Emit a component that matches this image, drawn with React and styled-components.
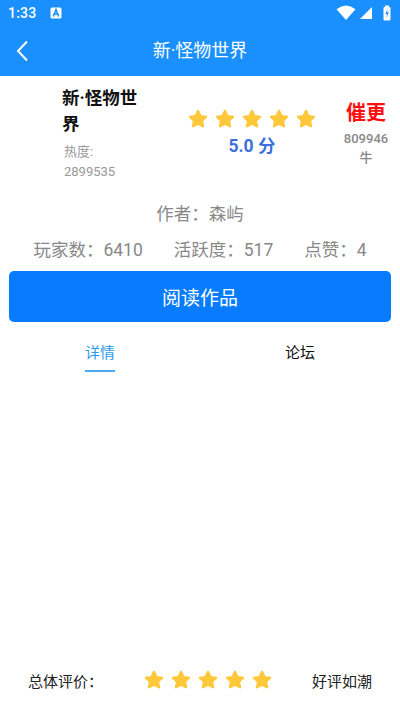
import React from "react";
import styled, { createGlobalStyle } from "styled-components";

const Global = createGlobalStyle`
  html, body { margin: 0; padding: 0; background: #fff; }
  body { font-family: Roboto, "Noto Sans CJK SC", sans-serif; }
  * { box-sizing: border-box; }
`;

const Page = styled.div`
  display: flex;
  flex-direction: column;
  min-height: 100vh;
  width: 400px;
  background: #fff;
`;

const Header = styled.header`
  background: #1a8ffe;
  color: #fff;
`;

const StatusBar = styled.div`
  height: 26px;
  display: flex;
  align-items: center;
  padding: 0 8px;
  font-family: Roboto, sans-serif;
  font-size: 14px;
  font-weight: 500;
`;

const Time = styled.span`
  letter-spacing: 0.2px;
`;

const StatusIcons = styled.div`
  margin-left: auto;
  display: flex;
  align-items: center;
  gap: 3px;
`;

const NavBar = styled.div`
  height: 50px;
  display: flex;
  align-items: center;
  position: relative;
  justify-content: center;
`;

const Back = styled.button`
  position: absolute;
  left: 12px;
  top: 50%;
  transform: translateY(-50%);
  background: none;
  border: 0;
  padding: 4px;
  display: flex;
`;

const NavTitle = styled.h1`
  margin: 0;
  font-size: 18px;
  font-weight: 400;
  line-height: 24px;
`;

const InfoRow = styled.section`
  display: flex;
  padding: 9px 10px 0 62px;
`;

const LeftCol = styled.div`
  width: 100px;
  display: flex;
  flex-direction: column;
`;

const BookTitle = styled.div`
  width: 86px;
  font-size: 17.5px;
  font-weight: 700;
  line-height: 26px;
  color: #111;
`;

const Heat = styled.div`
  margin-top: 5px;
  padding-left: 2px;
  font-size: 13px;
  line-height: 20px;
  color: #999;
`;

const CenterCol = styled.div`
  flex: 1;
  display: flex;
  flex-direction: column;
  align-items: center;
  padding-top: 24px;
`;

const Stars = styled.div`
  display: flex;
  gap: ${(p) => p.$gap || 7}px;
`;

const Score = styled.div`
  margin-top: 5px;
  font-size: 17.5px;
  font-weight: 700;
  line-height: 24px;
  color: #3a6fdc;
`;

const RightCol = styled.div`
  width: 48px;
  padding-top: 15px;
  display: flex;
  flex-direction: column;
  align-items: center;
  text-align: center;
`;

const Urge = styled.div`
  font-size: 20px;
  font-weight: 700;
  line-height: 26px;
  color: #ff1010;
  white-space: nowrap;
`;

const UrgeCount = styled.div`
  margin-top: 3px;
  font-size: 13px;
  font-weight: 500;
  line-height: 19px;
  color: #888;
  width: 48px;
`;

const Author = styled.div`
  margin-top: 20px;
  text-align: center;
  font-size: 17.5px;
  line-height: 24px;
  color: #888;
`;

const Stats = styled.div`
  margin-top: 12px;
  display: flex;
  justify-content: center;
  gap: 31px;
  font-size: 17.5px;
  line-height: 24px;
  color: #888;
`;

const ReadButton = styled.button`
  margin: 9px 9px 0;
  height: 51px;
  border: 0;
  border-radius: 5px;
  background: #087cff;
  color: #fff;
  font-family: inherit;
  font-size: 19px;
  font-weight: 400;
  display: flex;
  align-items: center;
  justify-content: center;
`;

const Tabs = styled.nav`
  margin-top: 10px;
  display: flex;
`;

const Tab = styled.div`
  flex: 1;
  display: flex;
  justify-content: center;
`;

const TabLabel = styled.span`
  display: inline-block;
  padding: 10px 0 6px;
  font-size: 15px;
  line-height: 22px;
  color: ${(p) => (p.$active ? "#2a9bf0" : "#111")};
  border-bottom: 2px solid ${(p) => (p.$active ? "#4aa8f2" : "transparent")};
`;

const Spacer = styled.div`
  flex: 1;
`;

const Footer = styled.footer`
  height: 64px;
  display: flex;
  align-items: center;
  justify-content: space-between;
  padding: 0 28px;
  font-size: 15px;
  color: #222;
`;

const Star = ({ size = 20 }) => (
  <svg width={size} height={size} viewBox="0 0 24 24">
    <polygon
      points="12,2.2 15,8.4 21.8,9.3 16.9,14 18.1,20.8 12,17.6 5.9,20.8 7.1,14 2.2,9.3 9,8.4"
      fill="#ffc83a"
      stroke="#ffc83a"
      strokeWidth="2.6"
      strokeLinejoin="round"
    />
  </svg>
);

const FiveStars = ({ gap }) => (
  <Stars $gap={gap}>
    {[0, 1, 2, 3, 4].map((i) => (
      <Star key={i} />
    ))}
  </Stars>
);

export default function App() {
  return (
    <Page>
      <Global />
      <Header>
        <StatusBar>
          <Time>1:33</Time>
          <svg width="12" height="12" viewBox="0 0 12 12" style={{ marginLeft: 14 }}>
            <rect x="0.5" y="0.5" width="11" height="11" rx="1.5" fill="#fff" />
            <path d="M3.2 9.5 L6 2.6 L8.8 9.5 M4.2 7.2 H7.8" stroke="#1a8ffe" strokeWidth="1.5" fill="none" />
          </svg>
          <StatusIcons>
            <svg width="20" height="16" viewBox="0 0 20 16">
              <path d="M10 15 L0.5 4.2 Q10 -3 19.5 4.2 Z" fill="#fff" />
            </svg>
            <svg width="14" height="14" viewBox="0 0 14 14">
              <path d="M13 1 V13 H1 Z" fill="#fff" />
            </svg>
            <svg width="10" height="16" viewBox="0 0 10 16" style={{ marginLeft: 6 }}>
              <rect x="3" y="0.5" width="4" height="2" fill="#fff" />
              <rect x="1.5" y="2" width="7" height="13.5" rx="1" fill="#fff" />
              <path d="M5.8 4 L3.3 9 H5 L4.2 13 L6.8 7.6 H5.1 Z" fill="#1a8ffe" />
            </svg>
          </StatusIcons>
        </StatusBar>
        <NavBar>
          <Back aria-label="返回">
            <svg width="14" height="22" viewBox="0 0 14 22">
              <path d="M11 1.5 L2 11 L11 20.5" stroke="#fff" strokeWidth="2" fill="none" />
            </svg>
          </Back>
          <NavTitle>新·怪物世界</NavTitle>
        </NavBar>
      </Header>

      <InfoRow>
        <LeftCol>
          <BookTitle>新·怪物世界</BookTitle>
          <Heat>
            热度:
            <br />
            2899535
          </Heat>
        </LeftCol>
        <CenterCol>
          <FiveStars gap={7} />
          <Score>5.0 分</Score>
        </CenterCol>
        <RightCol>
          <Urge>催更</Urge>
          <UrgeCount>809946牛</UrgeCount>
        </RightCol>
      </InfoRow>

      <Author>作者：森屿</Author>
      <Stats>
        <span>玩家数：6410</span>
        <span>活跃度：517</span>
        <span>点赞：4</span>
      </Stats>

      <ReadButton>阅读作品</ReadButton>

      <Tabs>
        <Tab>
          <TabLabel $active>详情</TabLabel>
        </Tab>
        <Tab>
          <TabLabel>论坛</TabLabel>
        </Tab>
      </Tabs>

      <Spacer />

      <Footer>
        <span>总体评价：</span>
        <FiveStars gap={7} />
        <span>好评如潮</span>
      </Footer>
    </Page>
  );
}
